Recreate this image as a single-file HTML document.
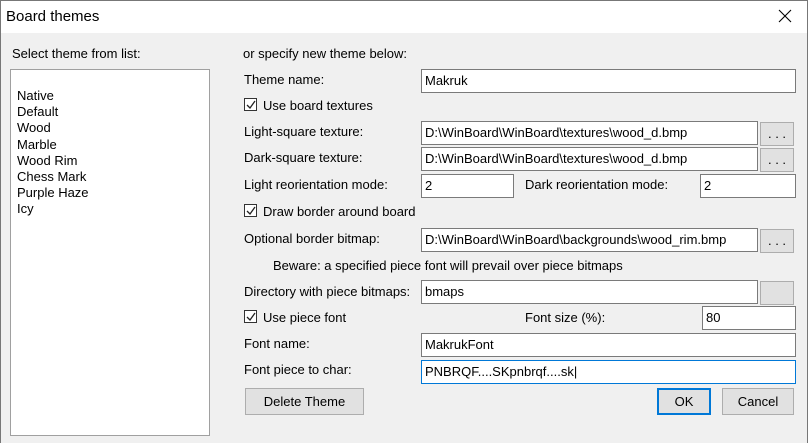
<!DOCTYPE html>
<html><head><style>
body{margin:0;width:808px;height:443px;overflow:hidden;background:#f0f0f0;font-family:"Liberation Sans",sans-serif;font-size:13px;color:#000;position:relative}
.a{position:absolute;white-space:nowrap}
.t{position:absolute;line-height:14px;white-space:nowrap}
.in{position:absolute;background:#fff;border:1px solid #7a7a7a;box-sizing:border-box;padding:0 0 0 3px;line-height:21px;white-space:nowrap;overflow:hidden}
.btn{position:absolute;background:#e1e1e1;border:1px solid #adadad;box-sizing:border-box;text-align:center}
.cb{position:absolute;width:13px;height:13px;border:1px solid #333;background:#fff;box-sizing:border-box}
</style></head><body>
<div class="a" style="left:0;top:0;width:808px;height:33px;background:#fff"></div>
<div class="a" style="left:0;top:0;width:1px;height:443px;background:#777"></div>
<div class="a" style="left:807px;top:0;width:1px;height:443px;background:#777"></div>
<div class="a" style="left:0;top:0;width:808px;height:1px;background:#777"></div>
<div class="t" style="left:6px;top:9px;font-size:15px;line-height:16px">Board themes</div>
<svg class="a" style="left:778px;top:9px" width="14" height="14"><path d="M1 1L13 13M13 1L1 13" stroke="#000" stroke-width="1.1"/></svg>

<div class="t" style="left:12px;top:47px">Select theme from list:</div>
<div class="a" style="left:10px;top:69px;width:200px;height:367px;background:#fff;border:1px solid #a0a0a0;box-sizing:border-box"></div>
<div class="a" style="left:17px;top:88px;line-height:16.2px">Native<br>Default<br>Wood<br>Marble<br>Wood Rim<br>Chess Mark<br>Purple Haze<br>Icy</div>

<div class="t" style="left:243px;top:47px">or specify new theme below:</div>
<div class="t" style="left:244px;top:73px">Theme name:</div>
<div class="in" style="left:421px;top:69px;width:375px;height:24px">Makruk</div>

<div class="cb" style="left:244px;top:98px"></div>
<svg class="a" style="left:246px;top:100px" width="10" height="10"><path d="M1 5L4 8L9 1" stroke="#222" stroke-width="1.3" fill="none"/></svg>
<div class="t" style="left:263px;top:99px">Use board textures</div>

<div class="t" style="left:244px;top:125px">Light-square texture:</div>
<div class="in" style="left:421px;top:121px;width:337px;height:24px">D:\WinBoard\WinBoard\textures\wood_d.bmp</div>
<div class="btn" style="left:760px;top:122px;width:34px;height:24px;line-height:22px">. . .</div>

<div class="t" style="left:244px;top:151px">Dark-square texture:</div>
<div class="in" style="left:421px;top:147px;width:337px;height:24px">D:\WinBoard\WinBoard\textures\wood_d.bmp</div>
<div class="btn" style="left:760px;top:148px;width:34px;height:24px;line-height:22px">. . .</div>

<div class="t" style="left:244px;top:178px">Light reorientation mode:</div>
<div class="in" style="left:421px;top:174px;width:93px;height:24px">2</div>
<div class="t" style="left:525px;top:178px">Dark reorientation mode:</div>
<div class="in" style="left:700px;top:174px;width:96px;height:24px">2</div>

<div class="cb" style="left:244px;top:204px"></div>
<svg class="a" style="left:246px;top:206px" width="10" height="10"><path d="M1 5L4 8L9 1" stroke="#222" stroke-width="1.3" fill="none"/></svg>
<div class="t" style="left:263px;top:205px">Draw border around board</div>

<div class="t" style="left:244px;top:232px">Optional border bitmap:</div>
<div class="in" style="left:421px;top:228px;width:337px;height:24px">D:\WinBoard\WinBoard\backgrounds\wood_rim.bmp</div>
<div class="btn" style="left:760px;top:229px;width:34px;height:24px;line-height:22px">. . .</div>

<div class="t" style="left:273px;top:259px">Beware: a specified piece font will prevail over piece bitmaps</div>

<div class="t" style="left:244px;top:285px">Directory with piece bitmaps:</div>
<div class="in" style="left:421px;top:280px;width:337px;height:24px">bmaps</div>
<div class="btn" style="left:760px;top:281px;width:34px;height:24px"></div>

<div class="cb" style="left:244px;top:310px"></div>
<svg class="a" style="left:246px;top:312px" width="10" height="10"><path d="M1 5L4 8L9 1" stroke="#222" stroke-width="1.3" fill="none"/></svg>
<div class="t" style="left:263px;top:311px">Use piece font</div>
<div class="t" style="left:525px;top:311px">Font size (%):</div>
<div class="in" style="left:702px;top:306px;width:94px;height:24px">80</div>

<div class="t" style="left:244px;top:337px">Font name:</div>
<div class="in" style="left:421px;top:333px;width:375px;height:24px">MakrukFont</div>

<div class="t" style="left:244px;top:363px">Font piece to char:</div>
<div class="in" style="left:421px;top:360px;width:375px;height:24px;border-color:#0078d7">PNBRQF....SKpnbrqf....sk|</div>

<div class="btn" style="left:245px;top:388px;width:119px;height:27px;line-height:25px">Delete Theme</div>
<div class="btn" style="left:657px;top:388px;width:54px;height:27px;line-height:23px;border:2px solid #0078d7">OK</div>
<div class="btn" style="left:722px;top:388px;width:72px;height:27px;line-height:25px">Cancel</div>
</body></html>
